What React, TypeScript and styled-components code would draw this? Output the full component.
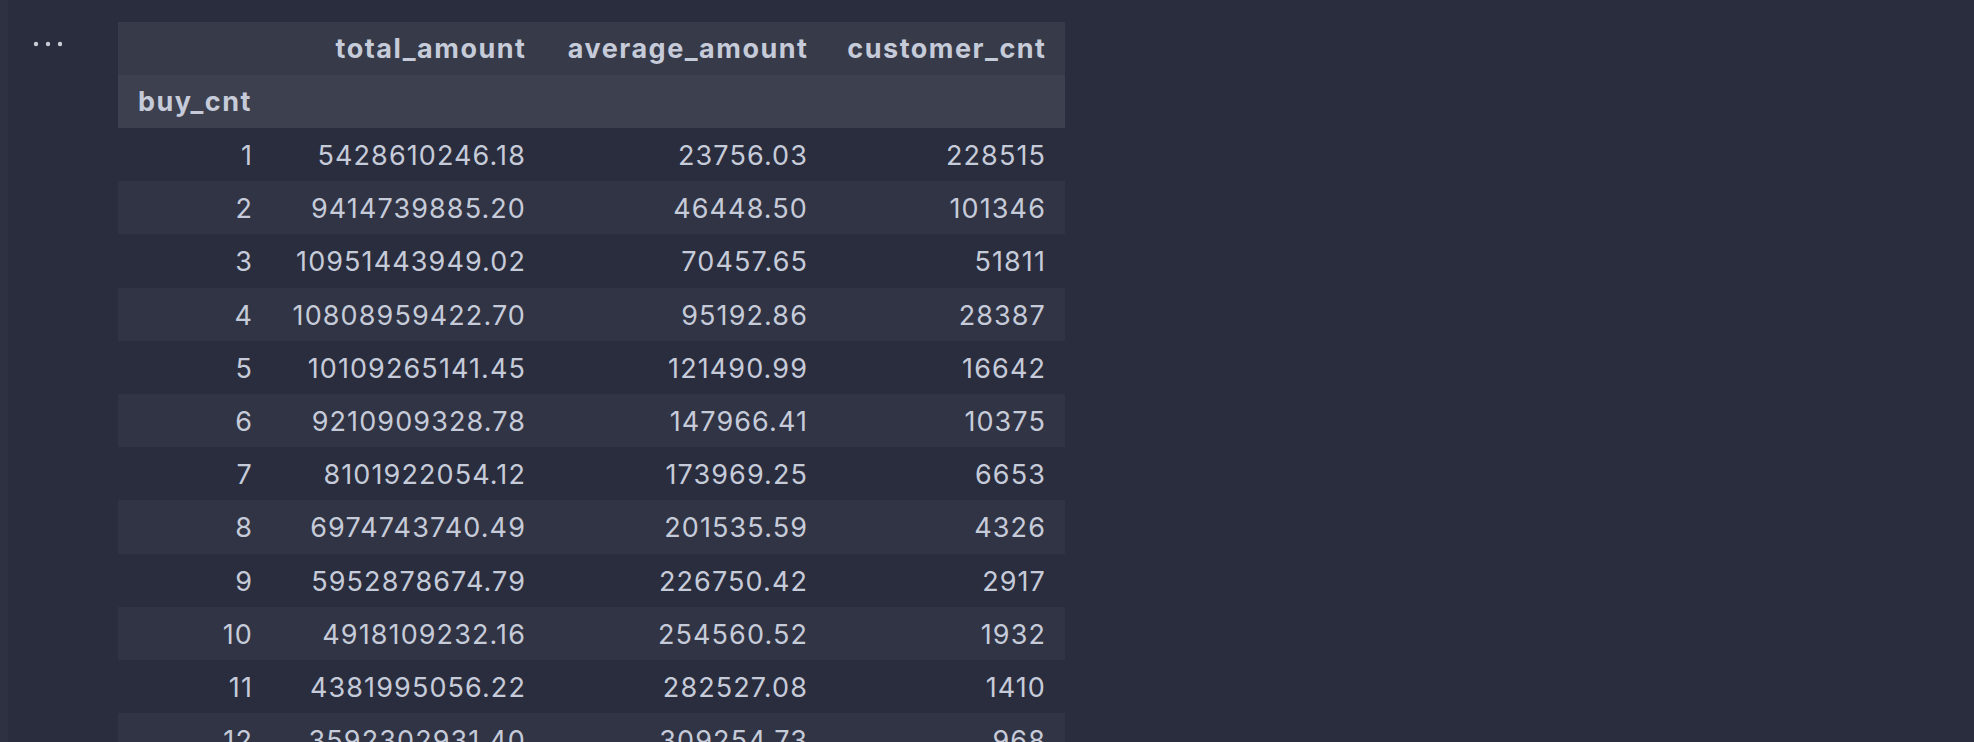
import React from "react";
import styled, { createGlobalStyle } from "styled-components";

const Global = createGlobalStyle`
  html, body {
    margin: 0;
    padding: 0;
    width: 1974px;
    height: 742px;
    overflow: hidden;
    background: #2a2d3e;
  }
  * { box-sizing: border-box; }
`;

const Page = styled.div`
  display: flex;
  width: 1974px;
  height: 742px;
  overflow: hidden;
  background: #2a2d3e;
  font-family: Inter, "Noto Sans", sans-serif;
  color: #c6cbd9;
`;

const Strip = styled.div`
  width: 8px;
  flex: none;
  background: #2e3142;
`;

const Gutter = styled.div`
  width: 110px;
  flex: none;
  display: flex;
  justify-content: flex-start;
  padding: 40px 0 0 24px;
`;

const Dots = styled.svg`
  display: block;
  width: 30px;
  height: 8px;
`;

const Output = styled.div`
  padding-top: 22px;
`;

const Table = styled.table`
  width: 947px;
  border-collapse: collapse;
  border-spacing: 0;
  table-layout: fixed;
  font-size: 27px;
`;

const Col = styled.col<{ $w: number }>`
  width: ${(p) => p.$w}px;
`;

const HeadRow = styled.tr<{ $second?: boolean }>`
  height: 53px;
  background: ${(p) => (p.$second ? "#3d404e" : "#373a49")};
`;

const Row = styled.tr<{ $alt: boolean }>`
  height: 53.2px;
  background: ${(p) => (p.$alt ? "#313444" : "#2a2d3e")};
`;

const Th = styled.th<{ $left?: boolean }>`
  padding: 0 18.5px 0 20px;
  font-weight: 700;
  letter-spacing: 1.5px;
  text-align: ${(p) => (p.$left ? "left" : "right")};
  white-space: nowrap;
  vertical-align: middle;
  color: #c6cbd9;
`;

const Td = styled.td`
  padding: 2px 19px 0 20px;
  letter-spacing: 1.1px;
  text-align: right;
  white-space: nowrap;
  vertical-align: middle;
  font-weight: 400;
  color: #c6cbd9;
`;

const rows: [number, string, string, string][] = [
  [1, "5428610246.18", "23756.03", "228515"],
  [2, "9414739885.20", "46448.50", "101346"],
  [3, "10951443949.02", "70457.65", "51811"],
  [4, "10808959422.70", "95192.86", "28387"],
  [5, "10109265141.45", "121490.99", "16642"],
  [6, "9210909328.78", "147966.41", "10375"],
  [7, "8101922054.12", "173969.25", "6653"],
  [8, "6974743740.49", "201535.59", "4326"],
  [9, "5952878674.79", "226750.42", "2917"],
  [10, "4918109232.16", "254560.52", "1932"],
  [11, "4381995056.22", "282527.08", "1410"],
  [12, "3592302931.40", "309254.73", "968"],
];

export default function App() {
  return (
    <>
      <Global />
      <Page>
        <Strip />
        <Gutter>
          <Dots viewBox="0 0 30 8">
            <circle cx="4" cy="4" r="2.2" fill="#c8ccd6" />
            <circle cx="16" cy="4" r="2.2" fill="#c8ccd6" />
            <circle cx="28" cy="4" r="2.2" fill="#c8ccd6" />
          </Dots>
        </Gutter>
        <Output>
          <Table>
            <colgroup>
              <Col $w={154} />
              <Col $w={273} />
              <Col $w={282} />
              <Col $w={238} />
            </colgroup>
            <thead>
              <HeadRow>
                <Th />
                <Th>total_amount</Th>
                <Th>average_amount</Th>
                <Th>customer_cnt</Th>
              </HeadRow>
              <HeadRow $second>
                <Th $left>buy_cnt</Th>
                <Th />
                <Th />
                <Th />
              </HeadRow>
            </thead>
            <tbody>
              {rows.map(([i, a, b, c]) => (
                <Row key={i} $alt={i % 2 === 0}>
                  <Td>{i}</Td>
                  <Td>{a}</Td>
                  <Td>{b}</Td>
                  <Td>{c}</Td>
                </Row>
              ))}
            </tbody>
          </Table>
        </Output>
      </Page>
    </>
  );
}
